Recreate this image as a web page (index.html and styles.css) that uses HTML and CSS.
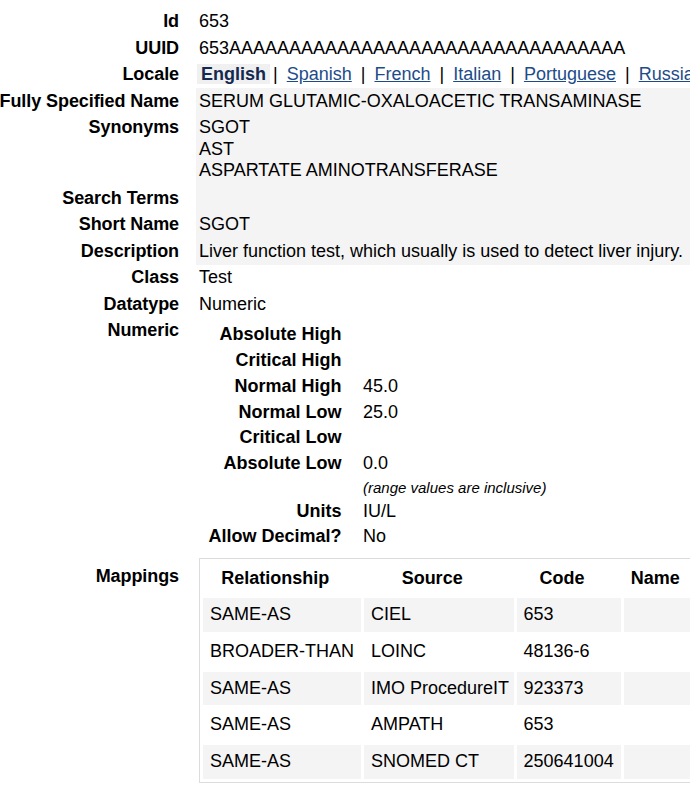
FILE: index.html
```html
<!DOCTYPE html>
<html lang="en">
<head>
<meta charset="utf-8">
<title>Concept 653</title>
<link rel="stylesheet" href="styles.css">
</head>
<body>
<div class="page">
<div class="concept">
  <div class="label">Id</div>
  <div class="value">653</div>

  <div class="label">UUID</div>
  <div class="value">653AAAAAAAAAAAAAAAAAAAAAAAAAAAAAAAAA</div>

  <div class="label">Locale</div>
  <div class="value locales">
    <span class="tab current">English</span>|<a class="tab" href="#">Spanish</a>|<a class="tab" href="#">French</a>|<a class="tab" href="#">Italian</a>|<a class="tab" href="#">Portuguese</a>|<a class="tab" href="#">Russian</a>
  </div>

  <div class="label">Fully Specified Name</div>
  <div class="value shade">SERUM GLUTAMIC-OXALOACETIC TRANSAMINASE</div>

  <div class="label">Synonyms</div>
  <div class="value shade synonyms">
    <div>SGOT</div>
    <div>AST</div>
    <div>ASPARTATE AMINOTRANSFERASE</div>
  </div>

  <div class="label">Search Terms</div>
  <div class="value shade"></div>

  <div class="label">Short Name</div>
  <div class="value shade">SGOT</div>

  <div class="label">Description</div>
  <div class="value shade">Liver function test, which usually is used to detect liver injury.</div>

  <div class="label">Class</div>
  <div class="value">Test</div>

  <div class="label">Datatype</div>
  <div class="value">Numeric</div>

  <div class="label">Numeric</div>
  <div class="value">
    <div class="numeric">
      <div class="nlabel">Absolute High</div><div class="nvalue"></div>
      <div class="nlabel">Critical High</div><div class="nvalue"></div>
      <div class="nlabel">Normal High</div><div class="nvalue">45.0</div>
      <div class="nlabel">Normal Low</div><div class="nvalue">25.0</div>
      <div class="nlabel">Critical Low</div><div class="nvalue"></div>
      <div class="nlabel">Absolute Low</div><div class="nvalue">0.0</div>
      <div class="nlabel"></div><div class="nvalue note">(range values are inclusive)</div>
      <div class="nlabel">Units</div><div class="nvalue">IU/L</div>
      <div class="nlabel">Allow Decimal?</div><div class="nvalue">No</div>
    </div>
  </div>

  <div class="label mappings-label">Mappings</div>
  <div class="value mappings">
    <table class="maps">
      <thead>
        <tr><th>Relationship</th><th>Source</th><th>Code</th><th>Name</th></tr>
      </thead>
      <tbody>
        <tr class="odd"><td>SAME-AS</td><td class="src">CIEL</td><td>653</td><td></td></tr>
        <tr><td>BROADER-THAN</td><td class="src">LOINC</td><td>48136-6</td><td></td></tr>
        <tr class="odd"><td>SAME-AS</td><td class="src">IMO ProcedureIT</td><td>923373</td><td></td></tr>
        <tr><td>SAME-AS</td><td class="src">AMPATH</td><td>653</td><td></td></tr>
        <tr class="odd"><td>SAME-AS</td><td class="src">SNOMED CT</td><td>250641004</td><td></td></tr>
      </tbody>
    </table>
  </div>

  <div class="label">Version</div>
  <div class="value"></div>
</div>
</div>
</body>
</html>
```

FILE: styles.css
```css
html,
body {
  margin: 0;
  padding: 0;
  background: #fff;
}

body {
  font-family: "Liberation Sans", Arial, sans-serif;
  font-size: 18px;
  line-height: 21.45px;
  color: #000;
}

.page {
  box-sizing: border-box;
  height: 100vh;
  overflow: hidden;
  padding: 8.5px 0 0 8px;
}

.concept {
  display: grid;
  grid-template-columns: 171px 1fr;
  column-gap: 17px;
  width: 1000px;
}

.label {
  display: flex;
  justify-content: flex-end;
  white-space: nowrap;
  font-weight: bold;
  letter-spacing: -0.08px;
  padding: 2.55px 0;
  min-height: 21.45px;
}

.value {
  padding: 2.55px 3px;
  white-space: nowrap;
  min-height: 21.45px;
}

.shade {
  background: #f4f4f4;
}

.synonyms {
  padding-bottom: 3.4px;
}

.tab {
  padding: 0 4px;
  margin: 0 5px;
}

.tab:first-child {
  margin-left: -2px;
  margin-right: 3px;
}

a.tab {
  color: #1d4c89;
  text-decoration: underline;
}

.current {
  background: #f0f0f0;
  color: #14294f;
  font-weight: bold;
}

.numeric {
  display: grid;
  grid-template-columns: 142.5px auto;
  column-gap: 21.5px;
  margin-top: 1.6px;
}

.nlabel {
  text-align: right;
  font-weight: bold;
  padding: 2.2px 0;
  white-space: nowrap;
}

.nvalue {
  padding: 2.2px 0;
  white-space: nowrap;
}

.note {
  font-style: italic;
  font-size: 15px;
  line-height: 17.2px;
}

.mappings-label {
  padding-top: 13.5px;
}

.mappings {
  padding-top: 5.3px;
  padding-left: 3px;
}

.maps {
  border: 1px solid #dcdcdc;
  border-collapse: separate;
  border-spacing: 3.5px;
  font-size: 18px;
}

.maps th {
  font-weight: bold;
  text-align: center;
  padding: 6px 20.3px 6px 7px;
  white-space: nowrap;
}

.maps td {
  padding: 6.1px 7px;
  white-space: nowrap;
  text-align: left;
}

.maps td.src {
  padding-right: 4.5px;
}

.maps tr.odd td {
  background: #f4f4f4;
}
```
